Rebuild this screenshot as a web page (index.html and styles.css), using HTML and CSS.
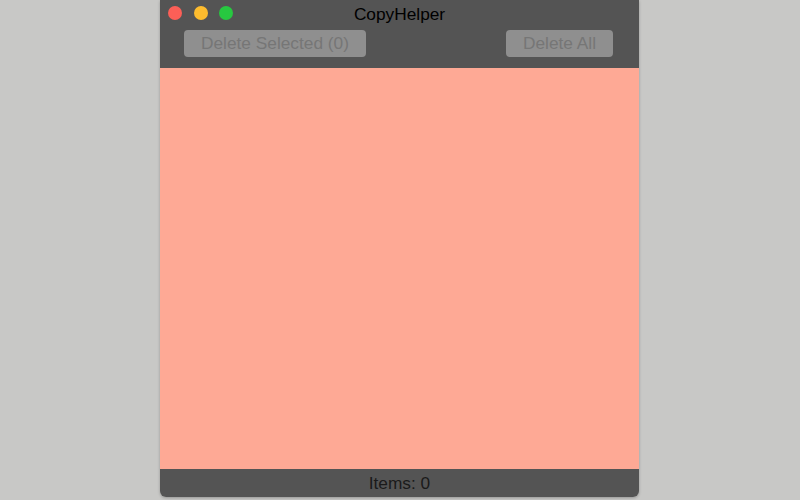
FILE: index.html
```html
<!DOCTYPE html>
<html>
<head>
<meta charset="utf-8">
<link rel="stylesheet" href="styles.css">
</head>
<body>
<div class="window">
  <div class="header">
    <div class="titlebar">
      <div class="lights">
        <span class="light red"></span>
        <span class="light yellow"></span>
        <span class="light green"></span>
      </div>
      <div class="title">CopyHelper</div>
    </div>
    <div class="toolbar">
      <button class="btn btn-sel">Delete Selected (0)</button>
      <button class="btn btn-all">Delete All</button>
    </div>
  </div>
  <div class="content"></div>
  <div class="footer">Items: 0</div>
</div>
</body>
</html>
```
FILE: styles.css
```css
html, body {
  margin: 0;
  padding: 0;
  width: 800px;
  height: 500px;
  background: #c8c8c6;
  overflow: hidden;
  font-family: "Liberation Sans", Arial, sans-serif;
}
.window {
  margin-left: 160px;
  width: 479px;
  height: 497px;
  display: flex;
  flex-direction: column;
  border-radius: 0 0 6px 6px;
  overflow: hidden;
  box-shadow: 0 1px 3px rgba(0,0,0,0.25);
}
.header {
  background: #545454;
  height: 68px;
  display: flex;
  flex-direction: column;
}
.titlebar {
  position: relative;
  height: 30px;
  display: flex;
  align-items: center;
  justify-content: center;
}
.lights {
  position: absolute;
  left: 8px;
  top: 6px;
  display: flex;
  gap: 11.5px;
}
.light {
  width: 14px;
  height: 14px;
  border-radius: 50%;
  display: block;
}
.red { background: #fc5f57; }
.yellow { background: #fdbc2e; }
.green { background: #27c840; }
.title {
  color: #000;
  font-size: 17.3px;
  margin-top: -2px;
}
.toolbar {
  display: flex;
  justify-content: space-between;
  padding: 0 26px 0 24px;
}
.btn {
  height: 27px;
  border: none;
  border-radius: 4px;
  background: #8f8f8f;
  color: #767676;
  font-family: "Liberation Sans", Arial, sans-serif;
  font-size: 17.3px;
  padding: 0;
}
.btn-sel { width: 182px; }
.btn-all { width: 107px; }
.content {
  flex: 1;
  background: #fea995;
}
.footer {
  height: 28px;
  background: #545454;
  color: #1a1a1a;
  font-size: 17.3px;
  display: flex;
  align-items: center;
  justify-content: center;
}
```
